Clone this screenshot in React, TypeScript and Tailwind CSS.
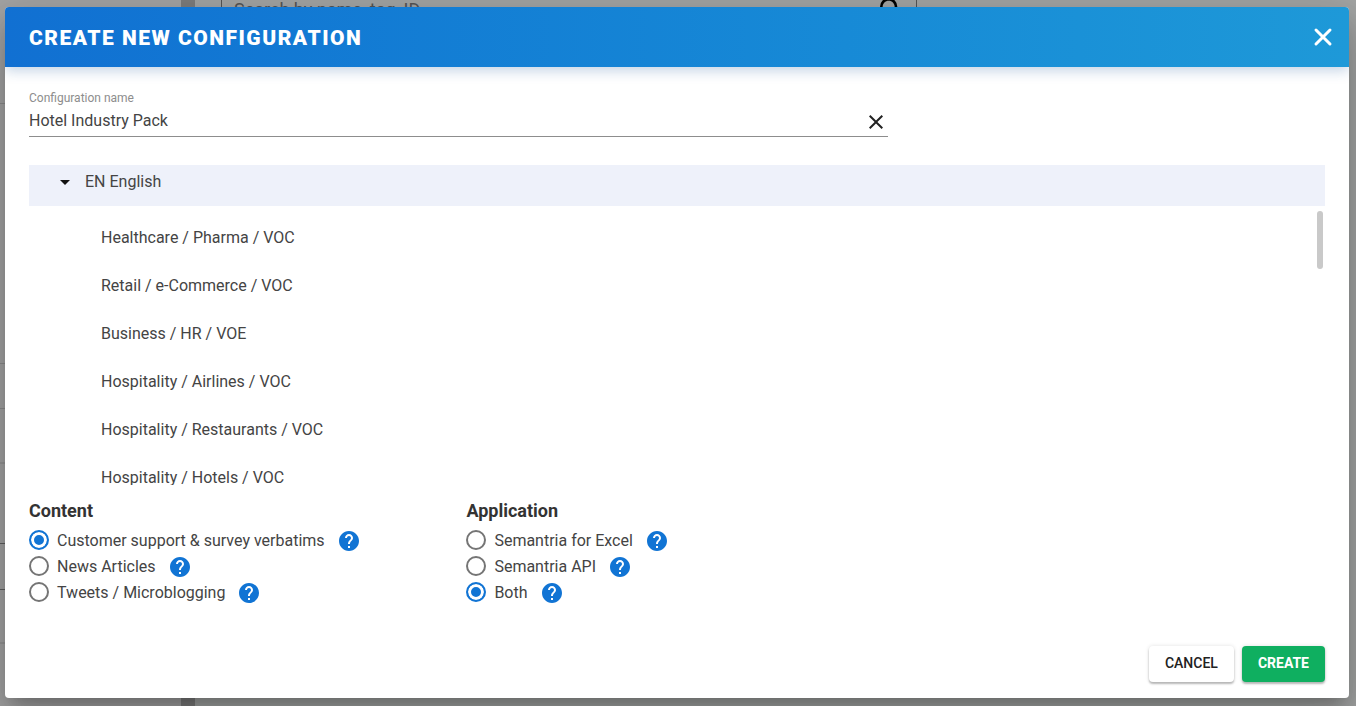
import { useState } from 'react';
import { MdArrowDropDown, MdClose, MdHelp, MdSearch } from 'react-icons/md';

const PACKS = [
  'Healthcare / Pharma / VOC',
  'Retail / e-Commerce / VOC',
  'Business / HR / VOE',
  'Hospitality / Airlines / VOC',
  'Hospitality / Restaurants / VOC',
  'Hospitality / Hotels / VOC',
];

const CONTENT = ['Customer support & survey verbatims', 'News Articles', 'Tweets / Microblogging'];
const APPLICATION = ['Semantria for Excel', 'Semantria API', 'Both'];

type RadioGroupProps = {
  title: string;
  name: string;
  options: string[];
  value: string;
  onChange: (v: string) => void;
};

function RadioGroup({ title, name, options, value, onChange }: RadioGroupProps) {
  return (
    <fieldset className="w-[33.75%]">
      <legend className="text-lg leading-7 font-bold text-[#333]">{title}</legend>
      <div className="pt-[3px]">
        {options.map((option) => (
          <div key={option} className="flex h-[26px] items-center">
            <label className="flex items-center gap-2">
              <input
                type="radio"
                name={name}
                checked={value === option}
                onChange={() => onChange(option)}
                className="mb-0.5 size-5 appearance-none rounded-full border-2 border-[#757575] checked:border-[#1174d4] checked:bg-[#1174d4] checked:shadow-[inset_0_0_0_3px_white]"
              />
              {option}
            </label>
            <button type="button" aria-label={`About ${option}`} className="ml-3 text-[#1174d4]">
              <MdHelp className="size-6" />
            </button>
          </div>
        ))}
      </div>
    </fieldset>
  );
}

function PageBehind() {
  return (
    <div className="flex h-screen bg-[#a4a4a4] text-[#555]">
      <div className="w-[181px] pt-[103px]">
        <div className="h-[261px] border-y border-[#8c8c8c]" />
        <div className="h-[45px] border-b border-[#8c8c8c]" />
        <div className="h-[55px] border-b-2 border-[#969696]" />
        <div className="h-20 border-b border-[#606060]" />
        <div className="h-[46px] border-b border-[#606060]" />
        <div className="h-[54px] border-b-2 border-[#969696]" />
      </div>
      <div className="w-[14px] bg-[#7d7d7d]" />
      <div className="flex-1 bg-[#a3a5a4] pl-[26px]">
        <div className="flex h-5 w-[61.3%] items-center justify-between border-x border-[#555] pr-2 pl-3">
          <span className="text-lg">Search by name, tag, ID</span>
          <MdSearch className="size-8 text-black" />
        </div>
      </div>
    </div>
  );
}

export default function App() {
  const [name, setName] = useState('Hotel Industry Pack');
  const [open, setOpen] = useState(true);
  const [content, setContent] = useState(CONTENT[0]);
  const [application, setApplication] = useState('Both');

  return (
    <div className="relative h-screen overflow-hidden font-[Roboto,sans-serif] text-base text-[#444]">
      <PageBehind />
      <div className="absolute inset-0 flex pt-[7px] pr-[7px] pb-2 pl-[5px]">
        <div
          role="dialog"
          aria-labelledby="dialog-title"
          className="flex flex-1 flex-col overflow-hidden rounded bg-white shadow-[0_11px_15px_-7px_rgba(0,0,0,0.2),0_24px_38px_3px_rgba(0,0,0,0.14),0_9px_46px_8px_rgba(0,0,0,0.12)]"
        >
          <header className="flex h-[60px] shrink-0 items-center justify-between bg-linear-to-r from-[#1170d2] to-[#1e99d8] pr-3 pl-6 text-white shadow-[0_4px_12px_rgba(17,80,150,0.24)]">
            <h1 id="dialog-title" className="pt-1 text-[21px] font-black tracking-[1.5px] uppercase">Create new configuration</h1>
            <button type="button" aria-label="Close">
              <svg viewBox="0 0 28 28" className="size-7" fill="none" stroke="currentColor" strokeWidth="3" strokeLinecap="round">
                <path d="M7 7l14 14M21 7L7 21" />
              </svg>
            </button>
          </header>

          <div className="flex min-h-0 flex-1 flex-col px-6 pt-[23px] pb-4">
            <div className="w-[66.3%]">
              <label htmlFor="config-name" className="block text-xs leading-4 text-[#8d8d8d]">Configuration name</label>
              <div className="flex h-[31px] items-center border-b border-[#8d8d8d]">
                <input
                  id="config-name"
                  value={name}
                  onChange={(e) => setName(e.target.value)}
                  className="min-w-0 flex-1 outline-none"
                />
                <button type="button" aria-label="Clear" onClick={() => setName('')} className="pt-0.5">
                  <MdClose className="size-6 text-[#222]" />
                </button>
              </div>
            </div>

            <button
              type="button"
              onClick={() => setOpen(!open)}
              className="mt-7 flex h-[41px] shrink-0 items-start bg-[#eef1fa] pt-[5px] pl-6"
            >
              <MdArrowDropDown className="mr-2 size-6 text-[#111]" />
              EN English
            </button>

            <div className="relative h-[279px] overflow-hidden">
              {open && (
                <ul className="pt-2 pl-[72px]">
                  {PACKS.map((pack) => (
                    <li key={pack} className="flex h-12 items-center">{pack}</li>
                  ))}
                </ul>
              )}
              <div className="absolute top-[5px] right-[2px] h-[58px] w-[6px] rounded-full bg-[#c9c9c9]" />
            </div>

            <div className="mt-3 flex">
              <RadioGroup title="Content" name="content" options={CONTENT} value={content} onChange={setContent} />
              <RadioGroup title="Application" name="application" options={APPLICATION} value={application} onChange={setApplication} />
            </div>

            <footer className="mt-auto flex justify-end gap-2 text-sm">
              <button type="button" className="h-9 rounded bg-white px-4 pb-0.5 font-medium text-[#222] shadow-[0_2px_2px_rgba(0,0,0,0.25),0_0_4px_rgba(0,0,0,0.12)]">CANCEL</button>
              <button type="button" className="h-9 rounded bg-[#0faf60] px-4 pb-0.5 font-bold text-white shadow-[0_2px_2px_rgba(0,0,0,0.25),0_0_4px_rgba(0,0,0,0.12)]">CREATE</button>
            </footer>
          </div>
        </div>
      </div>
    </div>
  );
}
